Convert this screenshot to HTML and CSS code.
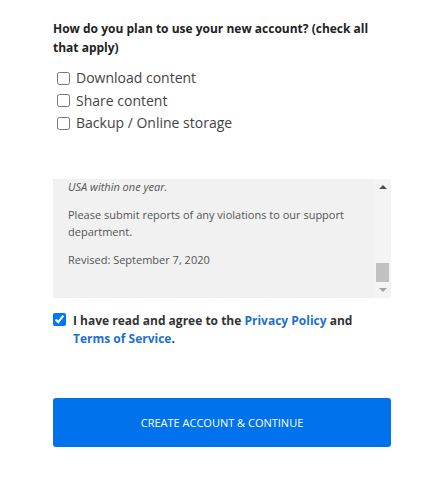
FILE: index.html
```html
<!DOCTYPE html>
<html>
<head>
<meta charset="utf-8">
<link rel="stylesheet" href="styles.css">
</head>
<body>
<div class="form">
  <p class="question">How do you plan to use your new account? (check all that apply)</p>
  <div class="options">
    <label class="option"><input type="checkbox"><span>Download content</span></label>
    <label class="option"><input type="checkbox"><span>Share content</span></label>
    <label class="option"><input type="checkbox"><span>Backup / Online storage</span></label>
  </div>
  <div class="terms">
    <div class="terms-text">
      <p class="it">USA within one year.</p>
      <p>Please submit reports of any violations to our support department.</p>
      <p>Revised: September 7, 2020</p>
    </div>
    <div class="scrollbar">
      <span class="arrow up"></span>
      <span class="track"><span class="thumb"></span></span>
      <span class="arrow down"></span>
    </div>
  </div>
  <label class="agree"><input type="checkbox" checked><span>I have read and agree to the <a href="#">Privacy Policy</a> and <a href="#">Terms of Service</a>.</span></label>
  <button class="submit">CREATE ACCOUNT &amp; CONTINUE</button>
</div>
</body>
</html>
```
FILE: styles.css
```css
* { box-sizing: border-box; }
body {
  margin: 0;
  background: #fff;
  font-family: "Open Sans", "Liberation Sans", sans-serif;
  color: #333;
}
.form {
  width: 338px;
  margin-left: 53px;
  padding-top: 19px;
  display: flex;
  flex-direction: column;
}
.question {
  margin: 0;
  font-size: 12px;
  font-weight: 700;
  line-height: 19px;
  color: #222;
}
.options {
  margin-top: 10px;
  display: flex;
  flex-direction: column;
}
.option {
  display: flex;
  align-items: center;
  font-size: 14px;
  line-height: 22.5px;
  color: #444;
}
.option input {
  margin: 0 6px 0 4px;
  width: 13px;
  height: 13px;
}
.terms {
  margin-top: 44px;
  height: 119px;
  background: #f1f1f1;
  display: flex;
}
.terms-text {
  flex: 1;
  padding: 0 0 0 15px;
  font-size: 11px;
  line-height: 16.5px;
  color: #555;
}
.terms-text p { margin: 0 0 12px; }
.terms-text .it { font-style: italic; }
.scrollbar {
  width: 17px;
  background: #f4f4f4;
  display: flex;
  flex-direction: column;
  align-items: center;
}
.arrow {
  width: 0; height: 0;
  border-left: 4px solid transparent;
  border-right: 4px solid transparent;
  margin: 6px 0;
}
.arrow.up { border-bottom: 4px solid #505050; }
.arrow.down { border-top: 4px solid #a3a3a3; }
.track {
  flex: 1;
  width: 100%;
  display: flex;
  flex-direction: column;
  justify-content: flex-end;
  padding: 0 2px;
}
.thumb {
  height: 19px;
  background: #c1c1c1;
}
.agree {
  margin-top: 14px;
  display: flex;
  align-items: flex-start;
  font-size: 12px;
  font-weight: 700;
  line-height: 18px;
  color: #333;
}
.agree input {
  margin: 1px 7px 0 0;
  width: 13px;
  height: 13px;
}
.agree a { color: #1d6fd1; text-decoration: none; }
.submit {
  margin-top: 50px;
  height: 49px;
  border: 0;
  border-radius: 3px;
  background: #0073ec;
  color: #fff;
  font-family: "Open Sans", "Liberation Sans", sans-serif;
  font-size: 11px;
  font-weight: 400;
}
```
